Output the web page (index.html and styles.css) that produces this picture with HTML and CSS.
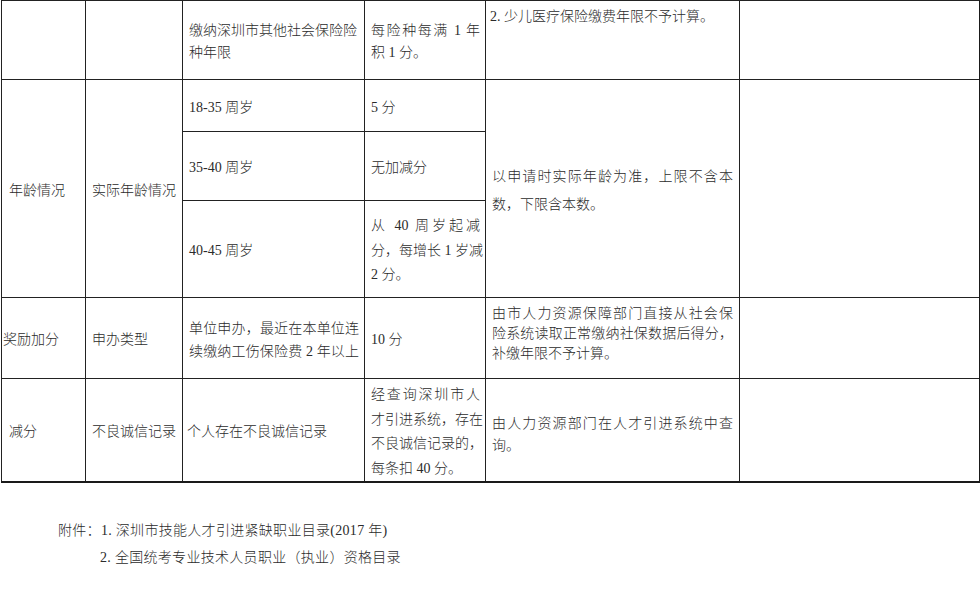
FILE: index.html
```html
<!DOCTYPE html>
<html lang="zh-CN">
<head>
<meta charset="utf-8">
<title>积分表</title>
<link rel="stylesheet" href="styles.css">
</head>
<body>
<table class="grid">
  <colgroup>
    <col class="w1"><col class="w2"><col class="w3"><col class="w4"><col class="w5"><col class="w6">
  </colgroup>
  <tr class="r1">
    <td></td>
    <td></td>
    <td class="lh22"><span class="ln">缴纳深圳市其他社会保险险</span><span class="ln">种年限</span></td>
    <td class="lh22"><span class="ln j">每险种每满 1 年</span><span class="ln">积 1 分。</span></td>
    <td class="top">2. 少儿医疗保险缴费年限不予计算。</td>
    <td></td>
  </tr>
  <tr class="r2">
    <td rowspan="3" class="c1">年龄情况</td>
    <td rowspan="3">实际年龄情况</td>
    <td>18-35 周岁</td>
    <td>5 分</td>
    <td rowspan="3" class="lh28 wide"><span class="ln j">以申请时实际年龄为准，上限不含本</span><span class="ln">数，下限含本数。</span></td>
    <td rowspan="3"></td>
  </tr>
  <tr class="r3">
    <td>35-40 周岁</td>
    <td>无加减分</td>
  </tr>
  <tr class="r4">
    <td>40-45 周岁</td>
    <td class="lh24"><span class="ln j">从 40 周岁起减</span><span class="ln j">分，每增长 1 岁减</span><span class="ln">2 分。</span></td>
  </tr>
  <tr class="r5">
    <td class="c1 tight">奖励加分</td>
    <td>申办类型</td>
    <td class="lh23"><span class="ln j">单位申办，最近在本单位连</span><span class="ln j">续缴纳工伤保险费 2 年以上</span></td>
    <td>10 分</td>
    <td class="lh20 wide raise"><span class="ln j">由市人力资源保障部门直接从社会保</span><span class="ln j">险系统读取正常缴纳社保数据后得分，</span><span class="ln">补缴年限不予计算。</span></td>
    <td></td>
  </tr>
  <tr class="r6">
    <td class="c1">减分</td>
    <td>不良诚信记录</td>
    <td class="narrow">个人存在不良诚信记录</td>
    <td class="lh24"><span class="ln j">经查询深圳市人</span><span class="ln j">才引进系统，存在</span><span class="ln j">不良诚信记录的，</span><span class="ln">每条扣 40 分。</span></td>
    <td class="lh22 wide low"><span class="ln j">由人力资源部门在人才引进系统中查</span><span class="ln">询。</span></td>
    <td></td>
  </tr>
</table>
<div class="notes">
  <p class="n1">附件：1. 深圳市技能人才引进紧缺职业目录(2017 年)</p>
  <p class="n2">2. 全国统考专业技术人员职业（执业）资格目录</p>
</div>
</body>
</html>
```

FILE: styles.css
```css
html, body {
  margin: 0;
  padding: 0;
  background: #ffffff;
}

body {
  font-family: "Liberation Serif", "Noto Sans CJK SC", serif;
  font-size: 14px;
  font-weight: 300;
  color: #2b2b2b;
}

.grid {
  margin-left: 1px;
  border-collapse: collapse;
  table-layout: fixed;
  width: 978px;
  border-bottom: 2px solid #1a1a1a;
  border-right: 2px solid #1a1a1a;
}

.w1 { width: 84px; }
.w2 { width: 97px; }
.w3 { width: 182px; }
.w4 { width: 121px; }
.w5 { width: 254px; }
.w6 { width: 240px; }

.grid td {
  border: 1px solid #222222;
  padding: 4px 5px 0 6px;
  vertical-align: middle;
  line-height: 22px;
  white-space: nowrap;
  overflow: visible;
}

.r1 td { height: 74px; }
.r2 td { height: 47px; }
.r3 td { height: 64px; }
.r4 td { height: 92px; }
.r5 td { height: 76px; }
.r6 td { height: 98px; }

.grid td.top {
  vertical-align: top;
  padding-top: 5px;
  padding-left: 4px;
  height: 73px;
}

.grid td.raise {
  padding-top: 0;
  padding-bottom: 8px;
  height: 72px;
}

.grid td.low {
  padding-top: 10px;
  height: 92px;
}

.grid td.c1 { padding-left: 7px; }
.grid td.tight { padding-left: 1px; }
.grid td.narrow { padding-left: 4px; }
.grid td.wide { padding-left: 6px; padding-right: 6px; }

.ln { display: block; }
.ln.j {
  text-align: justify;
  text-align-last: justify;
}

.grid td.lh20 { line-height: 20px; }
.grid td.lh22 { line-height: 22px; }
.grid td.lh23 { line-height: 23px; }
.grid td.lh24 { line-height: 24.5px; }
.grid td.lh28 { line-height: 28px; }

.notes {
  padding-top: 34px;
  line-height: 27px;
  letter-spacing: 0.3px;
}

.notes p { margin: 0; }
.n1 { padding-left: 58px; }
.n2 { padding-left: 100px; }
```
